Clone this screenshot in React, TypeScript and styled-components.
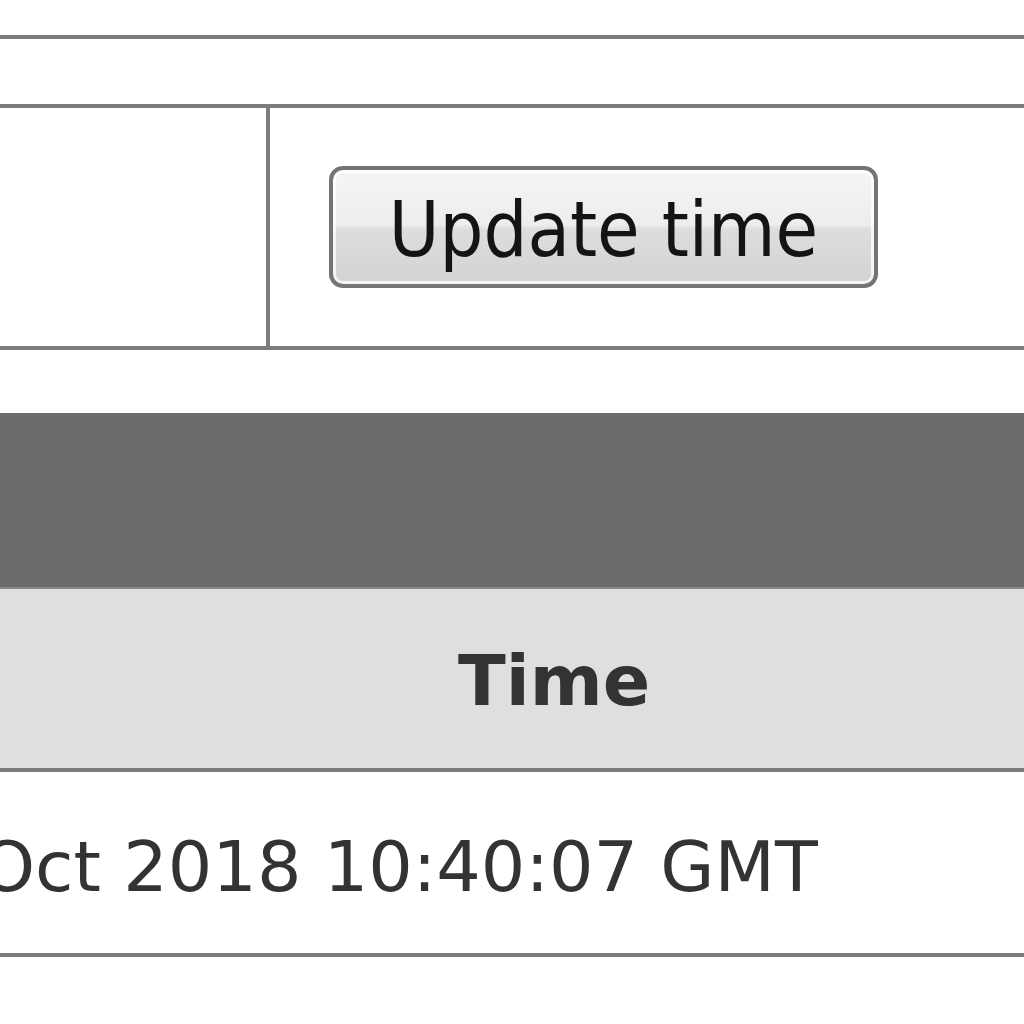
import React from 'react'
import styled, { createGlobalStyle } from 'styled-components'

const GlobalStyle = createGlobalStyle`
  html, body {
    margin: 0;
    padding: 0;
    background: #fff;
  }
  body {
    font-family: "DejaVu Sans", Verdana, sans-serif;
    color: #222;
  }
`

const line = '#7c7c7c'

const Page = styled.div`
  width: 1024px;
  height: 1024px;
  overflow: hidden;
  padding-top: 35px;
  box-sizing: border-box;
`

const FormTable = styled.div`
  border-top: 4px solid ${line};
  border-bottom: 4px solid ${line};
`

const EmptyRow = styled.div`
  height: 65px;
  border-bottom: 4px solid ${line};
`

const FormRow = styled.div`
  display: flex;
  height: 238px;
`

const LabelCell = styled.div`
  width: 266px;
  border-right: 4px solid ${line};
`

const ActionCell = styled.div`
  flex: 1;
  display: flex;
  align-items: center;
  padding-left: 59px;
`

const Button = styled.button`
  width: 549px;
  height: 122px;
  box-sizing: border-box;
  border: 4px solid #747474;
  border-radius: 14px;
  background: linear-gradient(to bottom, #f5f5f5 0%, #ededed 48%, #dddddd 52%, #d3d3d3 100%);
  box-shadow: inset 0 0 0 3px rgba(255, 255, 255, 0.75);
  font-family: "DejaVu Sans Condensed", Tahoma, sans-serif;
  font-size: 77px;
  color: #141414;
  padding: 5px 0 0;
  cursor: pointer;
`

const Gap = styled.div`
  height: 63px;
`

const TitleBar = styled.div`
  height: 174px;
  background: #6b6b6b;
`

const HeaderRow = styled.div`
  height: 185px;
  background: #dfdfdf;
  border-top: 2px solid #8a8a8a;
  border-bottom: 4px solid ${line};
  box-sizing: border-box;
  display: flex;
  align-items: center;
  padding-left: 458px;
  padding-top: 4px;
  font-weight: bold;
  font-size: 70px;
  color: #333;
`

const DataRow = styled.div`
  height: 181px;
  border-bottom: 4px solid ${line};
  display: flex;
  align-items: center;
  font-size: 70px;
  color: #333;
  white-space: nowrap;
`

const DataText = styled.span`
  margin-left: -20px;
  padding-top: 8px;
`

export default function App() {
  return (
    <>
      <GlobalStyle />
      <Page>
        <FormTable>
          <EmptyRow />
          <FormRow>
            <LabelCell />
            <ActionCell>
              <Button type="button">Update time</Button>
            </ActionCell>
          </FormRow>
        </FormTable>
        <Gap />
        <TitleBar />
        <HeaderRow>Time</HeaderRow>
        <DataRow>
          <DataText>Oct 2018 10:40:07 GMT</DataText>
        </DataRow>
      </Page>
    </>
  )
}
